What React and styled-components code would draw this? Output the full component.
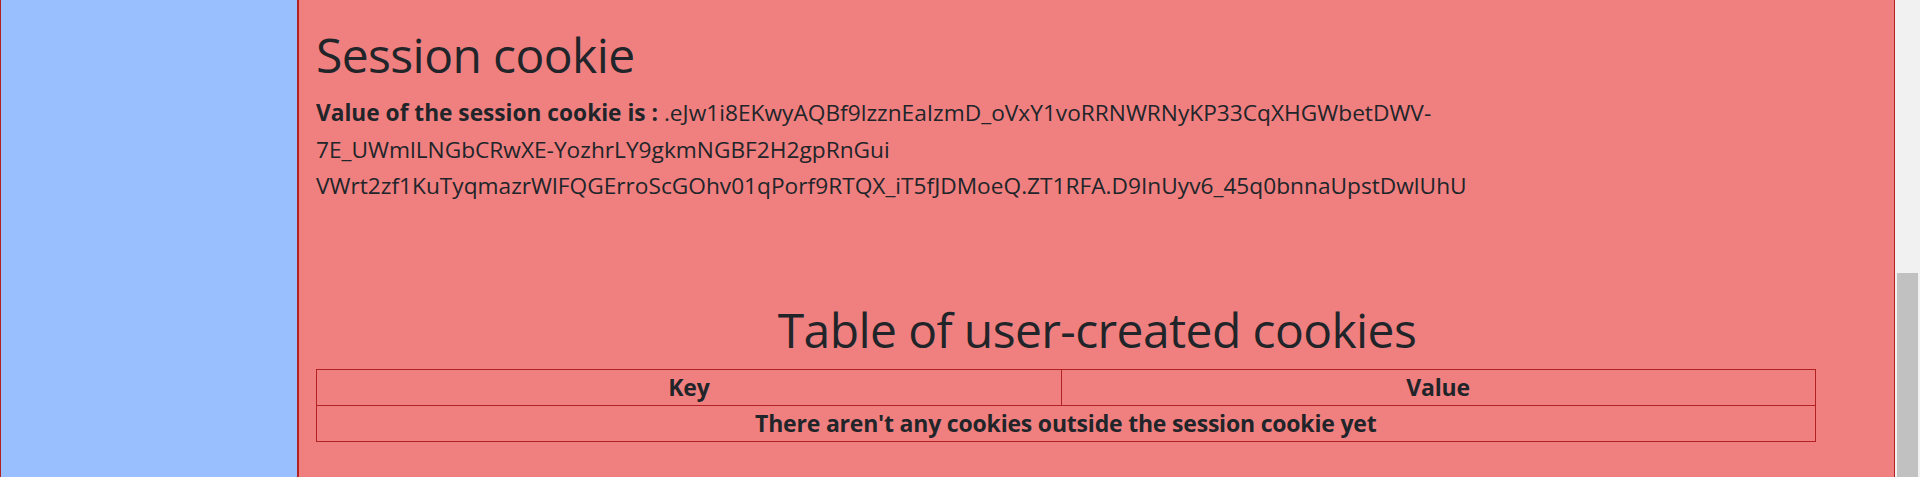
import styled, { createGlobalStyle } from "styled-components";

const GlobalStyle = createGlobalStyle`
  html, body {
    margin: 0;
    padding: 0;
    overflow: hidden;
    background-color: #f1f1f1;
  }

  body {
    font-family: "Open Sans", "Noto Sans", sans-serif;
    color: #212529;
  }
`;

const sessionValue = [
  ".eJw1i8EKwyAQBf9lzznEaIzmD_oVxY1voRRNWRNyKP33CqXHGWbetDWV-",
  "7E_UWmlLNGbCRwXE-YozhrLY9gkmNGBF2H2gpRnGui",
  "VWrt2zf1KuTyqmazrWlFQGErroScGOhv01qPorf9RTQX_iT5fJDMoeQ.ZT1RFA.D9InUyv6_45q0bnnaUpstDwlUhU",
];

const App = () => {
  return (
    <>
      <GlobalStyle />
      <Page>
        <Sidebar />
        <Main>
          <Title>Session cookie</Title>
          <CookieText>
            <strong>Value of the session cookie is :</strong>{" "}
            {sessionValue[0]}
            <br />
            {sessionValue[1]}
            <br />
            {sessionValue[2]}
          </CookieText>

          <Title $center>Table of user-created cookies</Title>
          <Table>
            <thead>
              <tr>
                <Cell as="th" $width="49.7%">Key</Cell>
                <Cell as="th">Value</Cell>
              </tr>
            </thead>
            <tbody>
              <tr>
                <Cell colSpan={2}>
                  There aren't any cookies outside the session cookie yet
                </Cell>
              </tr>
            </tbody>
          </Table>
        </Main>
        <ScrollTrack>
          <ScrollThumb />
        </ScrollTrack>
      </Page>
    </>
  );
};

const Page = styled.div`
  display: flex;
  height: 100vh;
  border-left: 1px solid #b22222;
  box-sizing: border-box;
`;

const Sidebar = styled.aside`
  width: 296px;
  flex-shrink: 0;
  background-color: #99bfff;
  border-right: 2px solid #b22222;
`;

const Main = styled.main`
  flex: 1;
  min-width: 0;
  background-color: #f08080;
  border-right: 1px solid #b22222;
  padding: 25px 16px 0 17px;
`;

const Title = styled.h1`
  font-size: 48px;
  font-weight: 500;
  letter-spacing: -0.6px;
  line-height: 60px;
  text-align: ${(props) => (props.$center ? "center" : "left")};
  margin: ${(props) => (props.$center ? "95px 0 9px" : "0 0 10px")};
`;

const CookieText = styled.p`
  margin: 0;
  font-size: 22.7px;
  line-height: 36.6px;

  strong {
    font-weight: 700;
  }
`;

const Table = styled.table`
  width: 96%;
  border-collapse: collapse;
  border: 1px solid #b22222;
`;

const Cell = styled.td`
  width: ${(props) => props.$width || "auto"};
  height: 35px;
  padding: 0;
  border: 1px solid #b22222;
  font-size: 23px;
  font-weight: 700;
  letter-spacing: -0.2px;
  line-height: 35px;
  text-align: center;
`;

const ScrollTrack = styled.div`
  width: 25px;
  flex-shrink: 0;
  background-color: #f1f1f1;
  padding: 273px 2px 0;
  box-sizing: border-box;
  display: flex;
`;

const ScrollThumb = styled.div`
  flex: 1;
  background-color: #c1c1c1;
`;

export default App;
